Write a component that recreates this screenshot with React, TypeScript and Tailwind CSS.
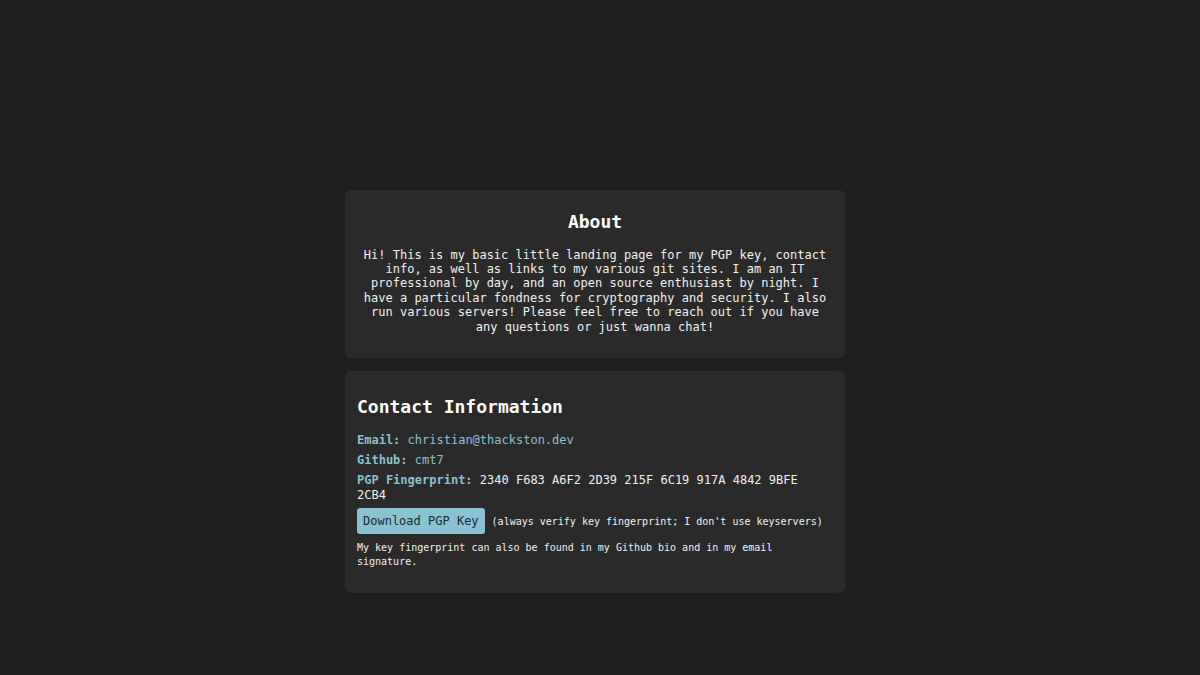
const mono = { fontFamily: '"DejaVu Sans Mono", "Liberation Mono", monospace' };

export default function App() {
  return (
    <div
      className="min-h-screen bg-[#1e1e1e] text-[#f0f0f0] pt-[190px] pb-[141px] pr-[10px]"
      style={mono}
    >
      <div className="mx-auto w-[500px] flex flex-col gap-[13px]">
        <section className="bg-[#2a2a2a] rounded-md px-3 pt-[21px] pb-6 text-center">
          <h2 className="text-[18px] leading-[21.6px] font-bold text-white">About</h2>
          <p className="mt-[15px] text-[12px] leading-[14.4px]">
            Hi! This is my basic little landing page for my PGP key, contact info, as well as links
            to my various git sites. I am an IT professional by day, and an open source enthusiast
            by night. I have a particular fondness for cryptography and security. I also run various
            servers! Please feel free to reach out if you have any questions or just wanna chat!
          </p>
        </section>

        <section className="bg-[#2a2a2a] rounded-md px-3 pt-[25px] pb-6">
          <h2 className="text-[18px] leading-[21.6px] font-bold text-white">Contact Information</h2>
          <div className="mt-[15px] text-[12px] leading-[14.4px] flex flex-col gap-[6px]">
            <p>
              <span className="font-bold text-[#8fbfce]">Email:</span>{" "}
              <a className="text-[#8fbfce]">christian@thackston.dev</a>
            </p>
            <p>
              <span className="font-bold text-[#8fbfce]">Github:</span>{" "}
              <a className="text-[#8fbfce]">cmt7</a>
            </p>
            <p>
              <span className="font-bold text-[#8fbfce]">PGP Fingerprint:</span> 2340 F683 A6F2
              2D39 215F 6C19 917A 4842 9BFE 2CB4
            </p>
          </div>
          <div className="mt-[6px] flex items-center gap-[7px]">
            <button className="h-[26px] px-[6px] rounded-[3px] bg-[#8ac2d2] text-[#1e2a30] text-[12px] leading-[14.4px]">
              Download PGP Key
            </button>
            <span className="text-[10px]">(always verify key fingerprint; I don't use keyservers)</span>
          </div>
          <p className="mt-[7px] text-[10px] leading-[14px]">
            My key fingerprint can also be found in my Github bio and in my email signature.
          </p>
        </section>
      </div>
    </div>
  );
}
